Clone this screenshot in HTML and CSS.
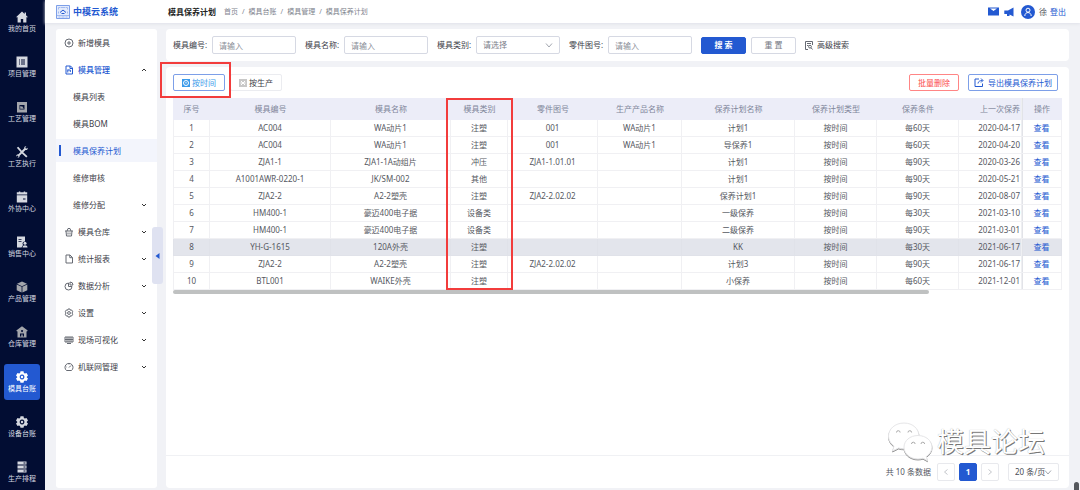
FILE: index.html
```html
<!DOCTYPE html>
<html lang="zh-CN">
<head>
<meta charset="utf-8">
<title>中模云系统</title>
<link rel="stylesheet" href="styles.css">
</head>
<body>
<div class="app">
  <nav class="rail">
    <a class="rail-item" href="#"><svg viewBox="0 0 12 12"><path d="M6 .5 0 6.200h1.600V11.500h3.200V8h2.400v3.500h3.200V6.200H12L10 4.300V1.500H8.600v1.400z"/></svg>我的首页</a>
    <a class="rail-item" href="#"><svg viewBox="0 0 12 12"><path fill-rule="evenodd" d="M.5.500h11v11H.500zM3 3.500v1h1v-1zm2 0v1h4v-1zM3 5.500v1h1v-1zm2 0v1h4v-1zM3 7.500v1h1v-1zm2 0v1h4v-1z"/></svg>项目管理</a>
    <a class="rail-item" href="#"><svg class="dim" viewBox="0 0 12 12"><path fill-rule="evenodd" d="M1 1h10v10.500H1zM3.500 4v4.500h5V4z"/><path d="M4.200 4.700l1 1 .8-.8 1.800 2.800H4.200z"/></svg>工艺管理</a>
    <a class="rail-item" href="#"><svg viewBox="0 0 12 12"><path d="M.8 1.800 2.300.800 5.800 4.800 8.300 2.300C8 1 9 .200 10.300.400L9.200 1.800l.9.9 1.500-1C12 3.300 10.800 4.300 9.500 4L7.200 6.200l4.300 4-1.300 1.400-4.300-4-2.300 2.200c.2 1.200-.8 2-2.100 1.900l1-1.500-.8-.8-1.400 1C0 9.200.900 8 2.400 8.200L4.600 6z"/></svg>工艺执行</a>
    <a class="rail-item" href="#"><svg viewBox="0 0 12 12"><path fill-rule="evenodd" d="M.8 3.500V1.300h2V.500h1.500v.8h3.400V.500h1.500v.8h2v2.200zM.8 4.300h10.400v7.200H.800zM7 7.500v1h2.500v-1z"/></svg>外协中心</a>
    <a class="rail-item" href="#"><svg viewBox="0 0 12 12"><path fill-rule="evenodd" d="M1 .500h8v5a2.200 2.200 0 0 0-2 3.500L5.500 11.500H1zM2.500 3v.8h3V3zm0 2v.8h3V5z"/><circle cx="9" cy="7.300" r="1.500"/><path d="M6.500 11.500c0-3 5-3 5 0z"/></svg>销售中心</a>
    <a class="rail-item" href="#"><svg class="dim" viewBox="0 0 12 12"><path d="M6 .500 11 2.800 6 5.200 1 2.800zM.700 3.500l4.900 2.300v5.700L.700 9.200zM11.300 3.500 6.400 5.800v5.700l4.900-2.300z"/></svg>产品管理</a>
    <a class="rail-item" href="#"><svg class="dim" viewBox="0 0 12 12"><path fill-rule="evenodd" d="M6 .300 11.700 4.500 11 5.500 10.500 5.200V11.500h-9V5.200L1 5.500.300 4.500zM6 4a1 1 0 1 0 .1 0zM4 7.500v3h1.300v-2h1.400v2H8v-3z"/></svg>仓库管理</a>
    <a class="rail-item active" href="#"><svg viewBox="0 0 12 12"><path fill-rule="evenodd" d="M4.500.300h3l.4 1.600 1 .6 1.600-.5L12 4.600l-1.200 1.100v.8L12 7.600l-1.500 2.500-1.600-.5-1 .600-.4 1.600h-3l-.4-1.600-1-.600-1.600.5L0 7.600l1.200-1.100v-.8L0 4.600 1.500 2l1.600.5 1-.6zM6 3.600a2.400 2.400 0 1 0 .1 0z"/><circle cx="6" cy="6" r="1.200"/></svg>模具台账</a>
    <a class="rail-item" href="#"><svg viewBox="0 0 12 12"><path fill-rule="evenodd" d="M4.500.300h3l.4 1.600 1 .6 1.600-.5L12 4.600l-1.200 1.100v.8L12 7.600l-1.500 2.500-1.600-.5-1 .600-.4 1.600h-3l-.4-1.600-1-.600-1.600.5L0 7.600l1.200-1.100v-.8L0 4.600 1.500 2l1.600.5 1-.6zM6 3.600a2.400 2.400 0 1 0 .1 0z"/><circle cx="6" cy="6" r="1.200"/></svg>设备台账</a>
    <a class="rail-item" href="#"><svg viewBox="0 0 12 12"><path fill-rule="evenodd" d="M1.500.500h9v3h-9zm0 4h9v3h-9zm0 4h9v3h-9zM7.500 1.600v.8h2v-.8zm0 4v.8h2v-.8zm0 4v.8h2v-.8z"/></svg>生产排程</a>
  </nav>

  <div class="page">
    <header class="topbar">
      <a class="brand" href="#">
        <svg viewBox="0 0 14 14"><path class="plate" d="M.5.500h13v13H.500z"/><path class="faint" d="M1 10.500h12M2.500 12h2m1 0h3m1 0h2M2.500 4.500v-2h2M11.500 4.500v-2h-2M5 2.500h4M2.500 8.500v-2M11.500 8.500v-2"/><path d="M4 7.500 7 5l3 2.500M5.500 8.500h3"/></svg>
        中模云系统
      </a>
      <strong class="page-title">模具保养计划</strong>
      <div class="crumbs"><a href="#">首页</a><i>/</i><a href="#">模具台账</a><i>/</i><a href="#">模具管理</a><i>/</i><a href="#">模具保养计划</a></div>
      <div class="account">
        <svg class="mail" viewBox="0 0 11 9"><path fill-rule="evenodd" d="M0 .500h11v8H0zM2 1.500 5.500 4 9 1.500z"/></svg>
        <svg class="horn" viewBox="0 0 10 10"><path d="M9.500.500v9L5.500 7.500V9H3V7H.300V3.500H4z"/></svg>
        <svg class="avatar" viewBox="0 0 14 14"><circle class="disc" cx="7" cy="7" r="7"/><circle cx="7" cy="5.200" r="2"/><path d="M3.800 11c0-4.600 6.400-4.600 6.400 0"/></svg>
        <span>徐</span><a href="#">登出</a>
      </div>
    </header>

    <div class="body">
      <aside class="side">
        <a class="side-item" href="#"><svg viewBox="0 0 10 10"><circle cx="5" cy="5" r="4"/><path d="M5 3v4M3 5h4"/></svg>新增模具</a>
        <a class="side-item open" href="#"><svg viewBox="0 0 10 10"><path d="M2 1h4.500L8.500 3v6H2zM6 1v2.500h2.500M3.800 4.500v3M3.800 5h2.500v2"/></svg>模具管理<svg class="caret" viewBox="0 0 6 6"><path d="M1 4l2-2 2 2"/></svg></a>
        <a class="side-item sub" href="#">模具列表</a>
        <a class="side-item sub" href="#">模具BOM</a>
        <a class="side-item sub current" href="#">模具保养计划</a>
        <a class="side-item sub" href="#">维修审核</a>
        <a class="side-item sub" href="#">维修分配<svg class="caret" viewBox="0 0 6 6"><path d="M1 2l2 2 2-2"/></svg></a>
        <a class="side-item" href="#"><svg viewBox="0 0 10 10"><path d="M1 4h8M3 4l1-2.500h2L7 4M2 4l.5 5h5L8 4M4 5.500v2M6 5.500v2"/></svg>模具仓库<svg class="caret" viewBox="0 0 6 6"><path d="M1 2l2 2 2-2"/></svg></a>
        <a class="side-item" href="#"><svg viewBox="0 0 10 10"><path d="M2 1h4l2.500 2.500V9H2zM5.800 1v2.700h2.700"/></svg>统计报表<svg class="caret" viewBox="0 0 6 6"><path d="M1 2l2 2 2-2"/></svg></a>
        <a class="side-item" href="#"><svg viewBox="0 0 10 10"><path d="M4.500 2A3.500 3.500 0 1 0 8 5.500H4.500zM6 1v3h3A3 3 0 0 0 6 1z"/></svg>数据分析<svg class="caret" viewBox="0 0 6 6"><path d="M1 2l2 2 2-2"/></svg></a>
        <a class="side-item" href="#"><svg viewBox="0 0 10 10"><path d="M4 1h2l.4 1.200 1.300-.2 1 1.700L8 5l.7 1.300-1 1.700-1.300-.2L6 9H4l-.4-1.200L2.300 8l-1-1.700L2 5l-.7-1.300 1-1.700 1.300.2z"/><circle cx="5" cy="5" r="1.400"/></svg>设置<svg class="caret" viewBox="0 0 6 6"><path d="M1 2l2 2 2-2"/></svg></a>
        <a class="side-item" href="#"><svg viewBox="0 0 10 10"><path d="M1 2h8v5H1zM3 8.500h4M1 4.500h8M3 2v5M5 2v5M7 2v5"/></svg>现场可视化<svg class="caret" viewBox="0 0 6 6"><path d="M1 2l2 2 2-2"/></svg></a>
        <a class="side-item" href="#"><svg viewBox="0 0 10 10"><path d="M2.500 8.500a4 4 0 1 1 5 0zM5 5.500 7 3.500M2.500 5h.5M5 2.500V3"/></svg>机联网管理<svg class="caret" viewBox="0 0 6 6"><path d="M1 2l2 2 2-2"/></svg></a>
        <button class="collapse" aria-label="收起菜单"><svg viewBox="0 0 5 6"><path d="M4.500 0v6L.500 3z"/></svg></button>
      </aside>

      <main class="main">
        <form class="card filters">
          <div class="field"><label for="code">模具编号:</label><input id="code" placeholder="请输入"></div>
          <div class="field"><label for="name">模具名称:</label><input id="name" placeholder="请输入"></div>
          <div class="field"><label for="type">模具类别:</label><span class="select"><select id="type"><option>请选择</option></select><svg viewBox="0 0 8 8"><path d="M1 2.500l3 3.500 3-3.500"/></svg></span></div>
          <div class="field"><label for="part">零件图号:</label><input id="part" placeholder="请输入"></div>
          <div class="actions">
            <button type="button" class="btn primary">搜 索</button>
            <button type="button" class="btn">重 置</button>
          </div>
          <a class="advanced" href="#"><svg viewBox="0 0 8 9"><path d="M7.500 4V.500h-7v8H3M2 2.500h4M2 4.500h1.500"/><circle cx="5" cy="5.700" r="1.400"/><path d="M6 6.700l1.500 1.800"/></svg>高级搜索</a>
        </form>

        <section class="card list">
          <div class="toolbar">
            <div class="tab-mark">
              <button class="btn tab on"><svg viewBox="0 0 8 8"><path class="fill" d="M0 0h8v8H0z"/><circle cx="4" cy="4" r="2.500"/><path d="M4 3v1.500"/></svg>按时间</button>
            </div>
            <button class="btn tab off"><svg viewBox="0 0 8 8"><path class="fill" d="M0 0h8v8H0z"/><path d="M2 2l4 4M6 2 2 6M1.500 4h5"/></svg>按生产</button>
            <div class="tools">
              <button class="btn danger">批量删除</button>
              <button class="btn export"><svg viewBox="0 0 10 9"><path d="M5 1H1v7.500h7.500V5.500M4 5.500C4 3.500 6 2.500 8.500 2.500M7 .500l2 2-2 2"/></svg>导出模具保养计划</button>
            </div>
          </div>

          <div class="table-wrap">
            <table>
              <colgroup><col class="c1"><col class="c2"><col class="c3"><col class="c4"><col class="c5"><col class="c6"><col class="c7"><col class="c8"><col class="c8"><col class="c10"><col class="c11"></colgroup>
              <thead><tr><th>序号</th><th>模具编号</th><th>模具名称</th><th>模具类别</th><th>零件图号</th><th>生产产品名称</th><th>保养计划名称</th><th>保养计划类型</th><th>保养条件</th><th>上一次保养</th><th>操作</th></tr></thead>
              <tbody>
                <tr><td>1</td><td>AC004</td><td>WA动片1</td><td>注塑</td><td>001</td><td>WA动片1</td><td>计划1</td><td>按时间</td><td>每60天</td><td>2020-04-17</td><td><a href="#">查看</a></td></tr>
                <tr><td>2</td><td>AC004</td><td>WA动片1</td><td>注塑</td><td>001</td><td>WA动片1</td><td>导保养1</td><td>按时间</td><td>每60天</td><td>2020-04-20</td><td><a href="#">查看</a></td></tr>
                <tr><td>3</td><td>ZJA1-1</td><td>ZJA1-1A动组片</td><td>冲压</td><td>ZJA1-1.01.01</td><td></td><td>计划1</td><td>按时间</td><td>每90天</td><td>2020-03-26</td><td><a href="#">查看</a></td></tr>
                <tr><td>4</td><td>A1001AWR-0220-1</td><td>JK/SM-002</td><td>其他</td><td></td><td></td><td>计划1</td><td>按时间</td><td>每90天</td><td>2020-05-21</td><td><a href="#">查看</a></td></tr>
                <tr><td>5</td><td>ZJA2-2</td><td>A2-2塑壳</td><td>注塑</td><td>ZJA2-2.02.02</td><td></td><td>保养计划1</td><td>按时间</td><td>每90天</td><td>2020-08-07</td><td><a href="#">查看</a></td></tr>
                <tr><td>6</td><td>HM400-1</td><td>豪迈400电子据</td><td>设备类</td><td></td><td></td><td>一级保养</td><td>按时间</td><td>每30天</td><td>2021-03-10</td><td><a href="#">查看</a></td></tr>
                <tr><td>7</td><td>HM400-1</td><td>豪迈400电子据</td><td>设备类</td><td></td><td></td><td>二级保养</td><td>按时间</td><td>每90天</td><td>2021-03-01</td><td><a href="#">查看</a></td></tr>
                <tr class="hover"><td>8</td><td>YH-G-1615</td><td>120A外壳</td><td>注塑</td><td></td><td></td><td>KK</td><td>按时间</td><td>每30天</td><td>2021-06-17</td><td><a href="#">查看</a></td></tr>
                <tr><td>9</td><td>ZJA2-2</td><td>A2-2塑壳</td><td>注塑</td><td>ZJA2-2.02.02</td><td></td><td>计划3</td><td>按时间</td><td>每90天</td><td>2021-06-17</td><td><a href="#">查看</a></td></tr>
                <tr><td>10</td><td>BTL001</td><td>WAIKE外壳</td><td>注塑</td><td></td><td></td><td>小保养</td><td>按时间</td><td>每60天</td><td>2021-12-01</td><td><a href="#">查看</a></td></tr>
              </tbody>
            </table>
            <div class="column-mark"></div>
          </div>
          <div class="hscroll"></div>

          <footer class="pager">
            <span>共 10 条数据</span>
            <button class="pg" aria-label="上一页"><svg viewBox="0 0 8 8"><path d="M5.500 1.500 2.500 4l3 2.500"/></svg></button>
            <button class="pg now">1</button>
            <button class="pg" aria-label="下一页"><svg viewBox="0 0 8 8"><path d="M2.500 1.500 5.500 4l-3 2.500"/></svg></button>
            <span class="select size"><select aria-label="每页条数"><option>20 条/页</option></select><svg viewBox="0 0 8 8"><path d="M1 2.500l3 3.500 3-3.500"/></svg></span>
          </footer>
          <div class="watermark">
            <svg viewBox="0 0 46 40"><path d="M17 1C8 1 1.500 7 1.500 14c0 4 2 7.500 5.500 10l-1.500 5 6-3c2 .6 4 .8 6 .8C26 26.800 32 21 32 14S26 1 17 1z"/><path d="M31 13.500c-8 0-14 5.200-14 11.700S23 37 31 37c1.700 0 3.400-.3 5-.8l4.500 2.500-1.200-4.200C42.500 32.200 45 29 45 25.200c0-6.500-6-11.700-14-11.700z"/><path class="eyes" d="M9.500 10.500a1.800 1.800 0 1 1 3.600 0M21 10.500a1.800 1.800 0 1 1 3.600 0M24.500 22a1.800 1.800 0 1 1 3.600 0M34 22a1.800 1.800 0 1 1 3.600 0"/></svg>
            <span>模具论坛</span>
          </div>
        </section>
      </main>
      <div class="thumb"></div>
    </div>
  </div>
</div>
</body>
</html>
```

FILE: styles.css
```css
* { box-sizing: border-box; }
body {
  margin: 0;
  font: 8px/12px "Noto Sans", "Noto Sans CJK SC", sans-serif;
  color: #555861;
  background: #f1f2f6;
}
a { color: inherit; text-decoration: none; }
svg { display: block; flex: none; fill: none; stroke: currentColor; stroke-width: 1; }
button, input, select { font: inherit; color: inherit; margin: 0; }
.app { display: flex; height: 100vh; overflow: hidden; }

/* Module rail */
.rail {
  flex: none; width: 45px; padding: 4px 5px 0 4px;
  display: flex; flex-direction: column; gap: 9px;
  background: #020d33; color: #d5d8e0; font-size: 7px;
}
.rail-item {
  flex: none; height: 36px; padding-top: 7px;
  display: flex; flex-direction: column; align-items: center;
  border-radius: 3px; white-space: nowrap;
}
.rail-item svg { width: 12px; height: 12px; fill: currentColor; stroke: none; }
.rail-item .dim { color: #a3a5ab; }
.rail-item.active { background: #2359d1; color: #fff; }

/* Top bar */
.page { flex: 1; min-width: 0; display: flex; flex-direction: column; }
.topbar {
  flex: none; height: 23px; padding: 0 14px 0 11px;
  display: flex; align-items: center;
  background: #fff; box-shadow: 0 1px 3px #dfe1e8; z-index: 1;
}
.brand {
  width: 112px; display: flex; align-items: center; gap: 3px;
  color: #2359d1; font-size: 9px; font-weight: 600;
}
.brand svg { width: 14px; height: 14px; }
.brand .plate { fill: #e3ebfc; stroke: #7d9fe8; }
.brand .faint { stroke: #a3bbf0; }
.page-title { color: #222; font-weight: 700; }
.crumbs { display: flex; gap: 4px; margin-left: 8px; font-size: 7px; color: #80848e; }
.crumbs i { font-style: normal; }
.account { margin-left: auto; display: flex; align-items: center; gap: 4px; color: #2359d1; }
.account svg { fill: currentColor; stroke: none; }
.account span { color: #4a4d55; margin-right: -1px; }
.mail { width: 11px; height: 9px; }
.horn { width: 10px; height: 10px; margin: 0 3px 0 1px; }
.account .avatar { width: 14px; height: 14px; fill: none; stroke: #fff; }
.account .disc { fill: #2359d1; stroke: none; }

/* Side menu */
.body { flex: 1; min-height: 0; display: flex; padding: 6px 11px 2px; gap: 9px; position: relative; }
.side {
  flex: none; width: 101px; padding-top: 2px; position: relative;
  display: flex; flex-direction: column; gap: 4px;
  background: #fff; border-radius: 3px;
}
.side-item { flex: none; height: 23px; padding: 0 10px 0 8px; display: flex; align-items: center; gap: 4px; color: #3d4048; }
.side-item svg { width: 10px; height: 10px; color: #666a73; }
.side-item .caret { width: 6px; height: 6px; margin-left: auto; color: #333; }
.side-item.open { color: #2359d1; font-weight: 500; }
.side-item.open svg:first-child { color: #2359d1; }
.sub { padding-left: 17px; }
.current { background: #f3f5fc; color: #2359d1; padding-left: 3px; }
.current::before { content: ""; width: 2px; height: 11px; margin-right: 8px; background: #2359d1; }
.collapse {
  position: absolute; left: 96px; top: 198px; width: 11px; height: 57px; padding: 0 3px;
  border: 0; border-radius: 3px; background: #dfe2f1; color: #2359d1;
}
.collapse svg { width: 5px; height: 6px; fill: currentColor; stroke: none; }

/* Cards */
.main { flex: 1; min-width: 0; display: flex; flex-direction: column; gap: 6px; }
.card { background: #fff; border-radius: 4px; }
.filters { height: 32px; padding: 0 7px; display: flex; align-items: center; gap: 9px; }
.field { display: flex; align-items: center; white-space: nowrap; color: #3d4048; }
.field label { width: 39px; }
.field input, .select { width: 84px; height: 18px; border: 1px solid #d6d9e3; border-radius: 2px; background: #fff; }
.field input { padding: 0 6px; outline: 0; }
.field input::placeholder { color: #8a8e98; opacity: 1; }
.select { position: relative; display: block; color: #7c808b; }
.select select { width: 100%; height: 100%; padding: 0 6px; border: 0; background: none; appearance: none; outline: 0; }
.select svg { position: absolute; right: 6px; top: 4px; width: 8px; height: 8px; color: #a3a7b0; pointer-events: none; }
.actions { display: flex; gap: 5px; }
.btn {
  height: 17px; padding: 0 8px; display: flex; align-items: center; justify-content: center; gap: 2px;
  border: 1px solid #d6d9e3; border-radius: 2px; background: #fff; white-space: nowrap;
}
.actions .btn { width: 45px; color: #777b85; }
.actions .primary { background: #2359d1; border-color: #2359d1; color: #fff; font-weight: 700; }
.advanced { display: flex; align-items: center; gap: 4px; color: #3d4048; }
.advanced svg { width: 8px; height: 9px; color: #666a73; }

/* Maintenance plan list */
.list { flex: 1; min-height: 0; padding: 7px 7px 0; display: flex; flex-direction: column; position: relative; }
.toolbar { display: flex; align-items: center; gap: 5px; margin-bottom: 7px; }
.tab svg { width: 8px; height: 8px; stroke: #fff; }
.tab .fill { fill: currentColor; stroke: none; }
.tab-mark { position: relative; }
.tab-mark::after { content: ""; position: absolute; inset: -12px -6px -7px -13px; border: 2px solid #f23c3c; pointer-events: none; }
.on { border-color: #7d9fe8; color: #3b9bea; }
.off { border-color: #ebecf0; color: #3d4048; }
.off svg { color: #c8c8c8; }
.tools { margin-left: auto; margin-right: 4px; display: flex; gap: 9px; }
.danger { border-color: #ff8585; color: #fb4c4c; }
.export { border-color: #7d9fe8; color: #2359d1; padding: 0 5px; gap: 4px; }
.export svg { width: 10px; height: 9px; }
.table-wrap { position: relative; }
table { width: 100%; table-layout: fixed; border-collapse: separate; border-spacing: 0; }
.c1 { width: 37px; } .c2 { width: 121px; } .c3 { width: 120px; } .c4 { width: 57px; }
.c5 { width: 90px; } .c6 { width: 84px; } .c7 { width: 113px; } .c8 { width: 82px; }
.c10 { width: 63px; } .c11 { width: 40px; }
th, td { padding: 0; text-align: center; white-space: nowrap; }
th { height: 22px; background: #ecedf8; color: #80869a; font-weight: 400; }
td { height: 17px; border-right: 1px solid #f0f0f3; border-bottom: 1px solid #f0f0f3; }
td:first-child { border-left: 1px solid #f0f0f3; }
th:nth-child(10), td:nth-child(10) { text-align: right; padding-right: 2px; border-right: 0; }
th:last-child, td:last-child { box-shadow: inset 1px 0 #e2e3e8, -1px 0 #eeeff2; }
td a { color: #2359d1; }
.hover td { background: #e3e5ec; border-color: #e0e2e9; }
.column-mark { position: absolute; left: 30.7%; width: 7.6%; top: 0; bottom: 0; border: 2px solid #f23c3c; pointer-events: none; }
.hscroll { width: 85%; height: 4px; border-radius: 2px; background: #bfc1c1; }

/* Pagination */
.pager {
  margin: auto -7px 0; height: 33px; padding-right: 10px;
  display: flex; align-items: center; justify-content: flex-end; gap: 4px;
  border-top: 1px solid #f0f1f4;
}
.pager > span:first-child { margin-right: 2px; }
.pg { width: 18px; height: 18px; padding: 0; display: grid; place-items: center; border: 1px solid #e8e9ed; border-radius: 2px; background: #fff; }
.pg svg { width: 8px; height: 8px; color: #c5c7cc; }
.now { background: #2359d1; border-color: #2359d1; color: #fff; font-weight: 700; }
.size { width: 51px; margin-left: 5px; border-color: #e8e9ed; color: #4a4d55; }
.watermark {
  position: absolute; right: 24px; bottom: 26px; display: flex; align-items: center; gap: 4px;
  color: #fff; font-size: 27px; line-height: 40px; text-shadow: 1px 1px 0 #777, 0 0 1px #aaa; pointer-events: none;
}
.watermark svg { width: 46px; height: 40px; fill: #fff; stroke: #e6e6e8; filter: drop-shadow(0 1px 0 #999); }
.watermark .eyes { fill: none; stroke: #aaa; }
.thumb { position: absolute; right: 1px; bottom: 0; width: 5px; height: 8px; border-radius: 3px 3px 0 0; background: #55575c; }
```
